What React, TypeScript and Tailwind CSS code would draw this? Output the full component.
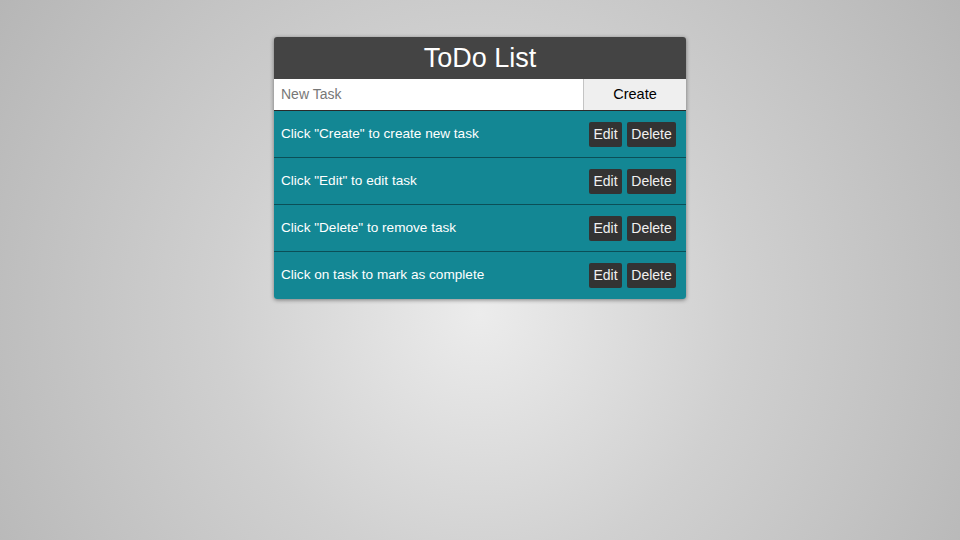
import { useState } from 'react';

type Task = { id: number; text: string; done: boolean };

const initialTasks: Task[] = [
  { id: 1, text: 'Click "Create" to create new task', done: false },
  { id: 2, text: 'Click "Edit" to edit task', done: false },
  { id: 3, text: 'Click "Delete" to remove task', done: false },
  { id: 4, text: 'Click on task to mark as complete', done: false },
];

export default function App() {
  const [tasks, setTasks] = useState<Task[]>(initialTasks);
  const [draft, setDraft] = useState('');

  const createTask = () => {
    if (!draft.trim()) return;
    setTasks([...tasks, { id: Date.now(), text: draft.trim(), done: false }]);
    setDraft('');
  };

  const editTask = (id: number) => {
    const t = tasks.find((x) => x.id === id);
    const next = window.prompt('Edit task', t?.text ?? '');
    if (next) setTasks(tasks.map((x) => (x.id === id ? { ...x, text: next } : x)));
  };

  return (
    <div className="min-h-screen w-full bg-[radial-gradient(circle_at_50%_58%,#ececec_0%,#d0d0d0_45%,#b6b6b6_100%)] font-['Liberation_Sans',Arial,sans-serif]">
      <div className="flex justify-center pt-[37px]">
        <div className="w-[412px] overflow-hidden rounded-[3px] shadow-[0_1px_4px_rgba(0,0,0,0.45)]">
          <div className="flex h-[42px] items-center justify-center bg-[#444444] text-[27px] text-white">
            ToDo List
          </div>
          <div className="flex h-[32px] border-b border-[#2a2a2a] bg-white">
            <input
              value={draft}
              onChange={(e) => setDraft(e.target.value)}
              placeholder="New Task"
              className="min-w-0 flex-1 px-[7px] text-[14px] text-[#333] outline-none placeholder:text-[#777]"
            />
            <button
              onClick={createTask}
              className="w-[103px] border-l border-[#c4c4c4] bg-[#efefef] text-[14.5px] text-black"
            >
              Create
            </button>
          </div>
          {tasks.map((t, i) => (
            <div
              key={t.id}
              onClick={() => setTasks(tasks.map((x) => (x.id === t.id ? { ...x, done: !x.done } : x)))}
              className={`flex h-[47px] items-center justify-between bg-[#138794] pl-[7px] pr-[10px] text-[13.6px] text-white ${
                i < tasks.length - 1 ? 'border-b border-[#0b4f57]' : ''
              }`}
            >
              <span className={t.done ? 'line-through opacity-70' : ''}>{t.text}</span>
              <div className="flex gap-[5px]">
                <button
                  onClick={(e) => {
                    e.stopPropagation();
                    editTask(t.id);
                  }}
                  className="h-[25px] w-[33px] rounded-[2px] bg-[#333333] text-[14px] text-[#f0f0f0]"
                >
                  Edit
                </button>
                <button
                  onClick={(e) => {
                    e.stopPropagation();
                    setTasks(tasks.filter((x) => x.id !== t.id));
                  }}
                  className="h-[25px] w-[49px] rounded-[2px] bg-[#333333] text-[14px] text-[#f0f0f0]"
                >
                  Delete
                </button>
              </div>
            </div>
          ))}
        </div>
      </div>
    </div>
  );
}
